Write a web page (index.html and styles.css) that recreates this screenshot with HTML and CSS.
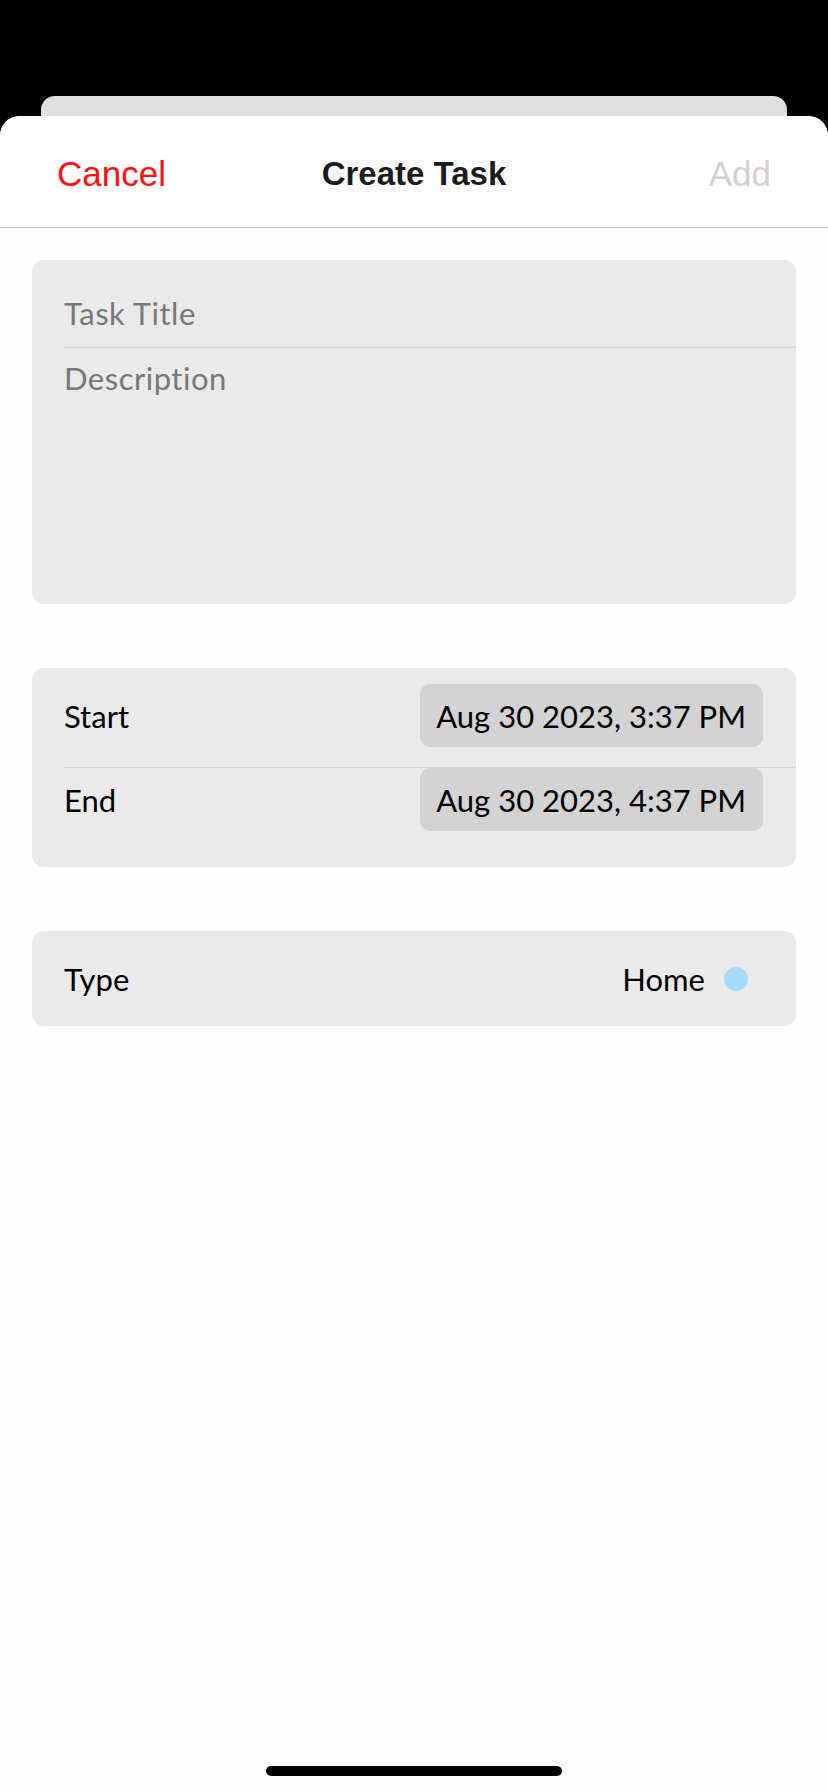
FILE: index.html
```
<!DOCTYPE html>
<html lang="en">
<head>
<meta charset="utf-8">
<title>Create Task</title>
<link rel="stylesheet" href="styles.css">
</head>
<body>
<div class="screen">
  <div class="back-card"></div>
  <div class="sheet">
    <header class="nav">
      <span class="nav-btn cancel">Cancel</span>
      <span class="nav-title">Create Task</span>
      <span class="nav-btn add">Add</span>
    </header>
    <main class="content">
      <section class="card text-card">
        <div class="field title-field"><span class="placeholder">Task Title</span></div>
        <div class="divider"></div>
        <div class="field desc-field"><span class="placeholder">Description</span></div>
      </section>
      <section class="card date-card">
        <div class="row start-row">
          <span class="label">Start</span>
          <span class="pill">Aug 30 2023, 3:37 PM</span>
        </div>
        <div class="divider"></div>
        <div class="row end-row">
          <span class="label">End</span>
          <span class="pill">Aug 30 2023, 4:37 PM</span>
        </div>
      </section>
      <section class="card type-card">
        <span class="label">Type</span>
        <span class="type-value">
          <span class="label">Home</span>
          <span class="dot"></span>
        </span>
      </section>
    </main>
    <div class="home-indicator"></div>
  </div>
</div>
</body>
</html>
```
FILE: styles.css
```
html, body {
  margin: 0;
  padding: 0;
  background: #000;
}
.screen {
  width: 828px;
  height: 1792px;
  overflow: hidden;
  background: #000;
  display: flex;
  flex-direction: column;
}
.back-card {
  margin: 96px 41px 0;
  height: 40px;
  flex: none;
  background: #e0e0e0;
  border-radius: 14px 14px 0 0;
}
.sheet {
  margin-top: -20px;
  flex: 1;
  background: #fefefe;
  border-radius: 20px 20px 0 0;
  display: flex;
  flex-direction: column;
}
.nav {
  height: 112px;
  box-sizing: border-box;
  padding: 4px 57px 0;
  border-bottom: 1px solid #b6b6b6;
  display: grid;
  grid-template-columns: 1fr auto 1fr;
  align-items: center;
  font-family: "Liberation Sans", Arial, sans-serif;
  background: #fff;
  border-radius: 20px 20px 0 0;
}
.nav-btn {
  font-size: 35px;
  line-height: 40px;
}
.cancel {
  color: #ff0f0f;
  justify-self: start;
}
.add {
  color: #d2d2d2;
  justify-self: end;
}
.nav-title {
  font-size: 33px;
  font-weight: bold;
  color: #1c1c1e;
  line-height: 40px;
}
.content {
  padding: 32px 32px 0;
  display: flex;
  flex-direction: column;
  gap: 64px;
  font-family: Lato, "Noto Sans", sans-serif;
  font-size: 31px;
  line-height: 36px;
}
.card {
  background: #eaeaea;
  border-radius: 12px;
}
.text-card {
  height: 344px;
  box-sizing: border-box;
}
.field {
  padding-left: 32px;
}
.title-field {
  padding-top: 35px;
  padding-bottom: 16px;
}
.desc-field {
  padding-top: 12px;
}
.placeholder {
  color: #787878;
  letter-spacing: 0.5px;
}
.divider {
  height: 1px;
  margin-left: 32px;
  background: #d4d4d4;
}
.row {
  display: flex;
  align-items: center;
  justify-content: space-between;
  padding: 0 33px 0 32px;
}
.start-row {
  padding-top: 16px;
  padding-bottom: 20px;
}
.end-row {
  padding-bottom: 36px;
}
.label {
  color: #000;
}
.pill {
  background: #d3d3d3;
  border-radius: 10px;
  padding: 14px 17px 13px 16px;
  color: #000;
}
.type-card {
  height: 95px;
  box-sizing: border-box;
  display: flex;
  align-items: center;
  justify-content: space-between;
  padding: 0 48px 0 32px;
}
.type-value {
  display: flex;
  align-items: center;
  gap: 19px;
}
.dot {
  width: 24px;
  height: 24px;
  border-radius: 50%;
  background: #a6dbfa;
}
.home-indicator {
  margin: auto auto 16px;
  width: 296px;
  height: 10px;
  border-radius: 5px;
  background: #000;
}
```
